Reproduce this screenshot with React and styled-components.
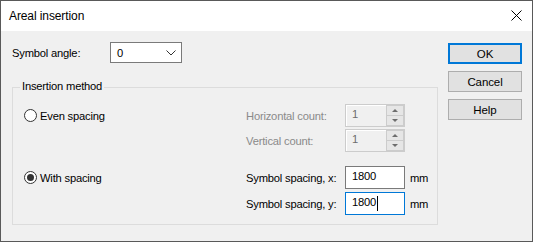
import React from "react";
import styled, { createGlobalStyle } from "styled-components";

const GlobalStyle = createGlobalStyle`
  html, body {
    margin: 0;
    padding: 0;
    background: #ffffff;
  }
  * {
    box-sizing: border-box;
  }
`;

const font = `"Segoe UI", "Liberation Sans", Arial, sans-serif`;

const Window = styled.div`
  width: 533px;
  height: 242px;
  border: 1px solid #595959;
  display: flex;
  flex-direction: column;
  font-family: ${font};
  font-size: 11.2px;
  letter-spacing: -0.2px;
  color: #000;
`;

const TitleBar = styled.div`
  height: 30px;
  background: #ffffff;
  display: flex;
  align-items: center;
  justify-content: space-between;
  padding: 0 10px 0 8px;
`;

const Title = styled.span`
  font-size: 12px;
  letter-spacing: -0.1px;
  padding-bottom: 1px;
`;

const CloseIcon = styled.svg`
  width: 11px;
  height: 11px;
  margin-top: -1px;
`;

const Body = styled.div`
  flex: 1;
  background: #f0f0f0;
  display: flex;
  padding: 11px 10px 0 11px;
`;

const Main = styled.div`
  width: 426px;
  display: flex;
  flex-direction: column;
`;

const AngleRow = styled.div`
  display: flex;
  align-items: center;
  height: 21px;
`;

const Label = styled.span`
  color: ${(p) => (p.disabled ? "#8a8a8a" : "#000")};
  white-space: nowrap;
  width: ${(p) => p.w || "auto"};
`;

const Combo = styled.div`
  width: 72px;
  height: 21px;
  border: 1px solid #7a7a7a;
  background: #fff;
  display: flex;
  align-items: center;
  justify-content: space-between;
  padding: 0 5px 0 6px;
`;

const GroupBox = styled.div`
  position: relative;
  margin-top: 24px;
  height: 138px;
  border: 1px solid #dcdcdc;
  padding: 16px 0 0 11px;
  display: flex;
  flex-direction: column;
  gap: 14px;
`;

const Legend = styled.span`
  position: absolute;
  top: -8px;
  left: 7px;
  padding: 0 2px;
  background: #f0f0f0;
`;

const Section = styled.div`
  display: flex;
`;

const RadioCol = styled.label`
  width: 222px;
  height: 23px;
  display: flex;
  align-items: center;
  gap: 3px;
`;

const RadioCircle = styled.span`
  width: 13px;
  height: 13px;
  border-radius: 50%;
  border: 1px solid #333;
  background: #fff;
  display: flex;
  align-items: center;
  justify-content: center;
  &::after {
    content: "";
    width: 7px;
    height: 7px;
    border-radius: 50%;
    background: ${(p) => (p.checked ? "#333" : "transparent")};
  }
`;

const Fields = styled.div`
  display: grid;
  grid-template-columns: 99px 60px auto;
  grid-auto-rows: 23px;
  row-gap: ${(p) => p.gap}px;
  align-items: center;
`;

const SpinBox = styled.div`
  width: 60px;
  height: 23px;
  border: 1px solid #cccccc;
  background: #f0f0f0;
  display: flex;
  box-shadow: inset 1px 1px 0 #fff;
`;

const SpinValue = styled.span`
  flex: 1;
  padding: 3px 0 0 6px;
  color: #6d6d6d;
`;

const SpinButtons = styled.div`
  width: 18px;
  display: flex;
  flex-direction: column;
  gap: 1px;
  padding: 1px;
  background: #cccccc;
`;

const SpinButton = styled.div`
  flex: 1;
  background: #e6e6e6;
  display: flex;
  align-items: center;
  justify-content: center;
  &::after {
    content: "";
    border-left: 3px solid transparent;
    border-right: 3px solid transparent;
    border-${(p) => (p.up ? "bottom" : "top")}: 3px solid #6d6d6d;
  }
`;

const TextInput = styled.div`
  width: 60px;
  height: 23px;
  border: 1px solid ${(p) => (p.focused ? "#0078d7" : "#7a7a7a")};
  background: #fff;
  padding: 3px 0 0 6px;
  display: flex;
  align-items: flex-start;
`;

const Caret = styled.span`
  width: 1px;
  height: 15px;
  background: #000;
  margin-left: 1px;
`;

const Unit = styled.span`
  padding-left: 5px;
`;

const ButtonCol = styled.div`
  margin-left: auto;
  padding-top: 1px;
  display: flex;
  flex-direction: column;
  gap: 7px;
`;

const DialogButton = styled.button`
  width: 74px;
  height: 21px;
  font-family: ${font};
  font-size: 11.5px;
  letter-spacing: -0.1px;
  color: #000;
  background: #e1e1e1;
  border: ${(p) => (p.primary ? "2px solid #0078d7" : "1px solid #adadad")};
  padding: 0;
  margin: 0;
`;

const Spin = ({ value }) => (
  <SpinBox>
    <SpinValue>{value}</SpinValue>
    <SpinButtons>
      <SpinButton up />
      <SpinButton />
    </SpinButtons>
  </SpinBox>
);

export default function App() {
  return (
    <>
      <GlobalStyle />
      <Window>
        <TitleBar>
          <Title>Areal insertion</Title>
          <CloseIcon viewBox="0 0 11 11">
            <path d="M0.5 0.5 L10.5 10.5 M10.5 0.5 L0.5 10.5" stroke="#000" strokeWidth="1" fill="none" />
          </CloseIcon>
        </TitleBar>
        <Body>
          <Main>
            <AngleRow>
              <Label w="98px">Symbol angle:</Label>
              <Combo>
                <span>0</span>
                <svg width="10" height="6" viewBox="0 0 10 6">
                  <path d="M0.5 0.5 L5 5 L9.5 0.5" stroke="#333" fill="none" />
                </svg>
              </Combo>
            </AngleRow>
            <GroupBox>
              <Legend>Insertion method</Legend>
              <Section>
                <RadioCol>
                  <RadioCircle />
                  <span>Even spacing</span>
                </RadioCol>
                <Fields gap={2}>
                  <Label disabled>Horizontal count:</Label>
                  <Spin value="1" />
                  <span />
                  <Label disabled>Vertical count:</Label>
                  <Spin value="1" />
                  <span />
                </Fields>
              </Section>
              <Section>
                <RadioCol>
                  <RadioCircle checked />
                  <span>With spacing</span>
                </RadioCol>
                <Fields gap={3}>
                  <Label>Symbol spacing, x:</Label>
                  <TextInput>1800</TextInput>
                  <Unit>mm</Unit>
                  <Label>Symbol spacing, y:</Label>
                  <TextInput focused>
                    1800
                    <Caret />
                  </TextInput>
                  <Unit>mm</Unit>
                </Fields>
              </Section>
            </GroupBox>
          </Main>
          <ButtonCol>
            <DialogButton primary>OK</DialogButton>
            <DialogButton>Cancel</DialogButton>
            <DialogButton>Help</DialogButton>
          </ButtonCol>
        </Body>
      </Window>
    </>
  );
}
